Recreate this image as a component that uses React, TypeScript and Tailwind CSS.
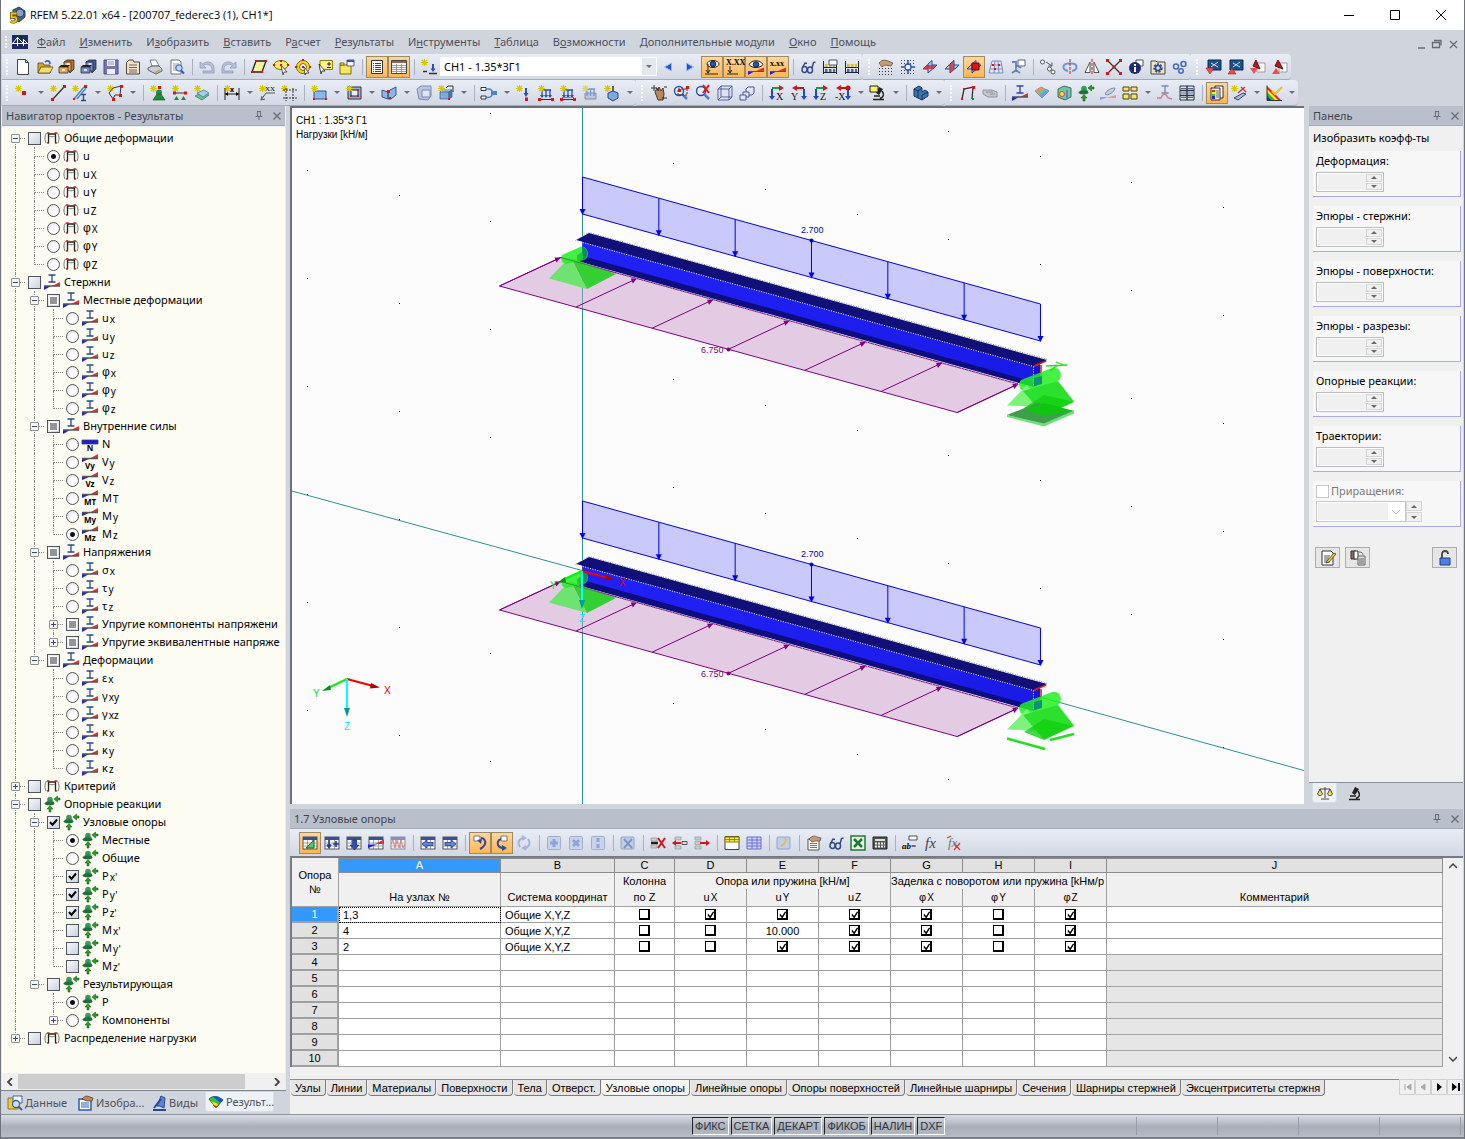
import React, { ReactNode } from "react";

/* ---------- shared icon parts (all on a 16x16 box) ---------- */

const star = <path d="M3.5 0v7M0 3.5h7M1 1l5 5M6 1L1 6" stroke="#d9c800" strokeWidth="1.2" fill="none" />;

const grid = (
  <g>
    <rect x="1" y="2" width="14" height="12" fill="#fff" stroke="#555" />
    <path d="M1 3.5h14" stroke="#3a4f9c" strokeWidth="3" />
    <path d="M1 8h14M1 11h14M5.5 5v9M10.5 5v9" stroke="#888" strokeWidth=".8" />
  </g>
);

const diagram = (
  <g>
    <path d="M0 16v-4h7z" fill="#1a1aff" />
    <path d="M16 8v4H8z" fill="#e03030" />
    <path d="M0 12h16" stroke="#555" strokeWidth="1.500" />
  </g>
);

const beamI = <path d="M4.500 1h7M4.500 8h7M8 1v7" stroke="#2c4a92" strokeWidth="1.300" fill="none" />;

const support = (
  <g>
    <circle cx="6" cy="3.500" r="2.800" fill="#3f9a5c" />
    <path d="M2 7c0-2 2-3 4-3s4 1 4 3z" fill="#2c8a4a" />
    <ellipse cx="5.500" cy="7.500" rx="5" ry="1.800" fill="#1f6f3a" />
    <path d="M16 2h-2.500V0L10 3l3.500 3V4H16z" fill="#12b012" stroke="#333" strokeWidth=".5" />
    <path d="M5 16v-3H3l3-3.500L9 13H7v3z" fill="#12b012" stroke="#333" strokeWidth=".5" />
  </g>
);

const greySheet = <rect x="1" y="2" width="13" height="12" rx="1" fill="#c3cde6" stroke="#93a3cb" />;

const abacus = (
  <g>
    <path d="M1.500 2v13M14.500 2v13M1 8.500h14M1 13.500h14" stroke="#222" fill="none" />
    <path d="M3 6.500h2.500M7 6.500h2.500M11 6.500h2" stroke="#e0c200" strokeWidth="3" />
    <path d="M3 11.500h2.500M7 11.500h2.500M11 11.500h2" stroke="#4566b8" strokeWidth="3" />
  </g>
);

const lens = (
  <g>
    <circle cx="6" cy="6" r="4.500" fill="#e4ecff" stroke="#2f4a9a" strokeWidth="1.400" />
    <path d="M9.500 9.500L14 14" stroke="#5b78c8" strokeWidth="2.500" />
  </g>
);

const cadPlane = (
  <g fill="#a9c8ef" stroke="#1d4f9c">
    <path d="M1 10l4-4h10l-4 4z" />
    <path d="M6 14V5l4-3.500v9z" />
  </g>
);

const axes = (letter: string, flip?: boolean) => (
  <g>
    <g transform={flip ? "translate(16 0) scale(-1 1)" : undefined}>
      <path d="M3 3h8" stroke={flip ? "#c81414" : "#11a03a"} strokeWidth="2" />
      <path d="M10 0l5 3-5 3z" fill="#d01818" />
      <path d="M3 4v8" stroke="#2546c9" strokeWidth="2" />
      <path d="M0 11h6l-3 4z" fill="#2546c9" />
    </g>
    <text x={flip ? 0 : 7} y="15" fontSize="10" fontFamily="Liberation Serif" fill="#111">
      {letter}
    </text>
  </g>
);

const solid = (
  <g>
    <path d="M2 7l3-2h9l-3 2z" fill="#c9dcf5" stroke="#38598f" strokeWidth=".7" />
    <path d="M2 7h9v7H2z" fill="#7fa8dc" stroke="#38598f" strokeWidth=".7" />
    <path d="M11 7l3-2v7l-3 2z" fill="#4f79b5" stroke="#38598f" strokeWidth=".7" />
  </g>
);

const loads = (
  <g>
    <path d="M3 5h10M4 5v7M8 5v7M12 5v7" stroke="#2a4fb5" strokeWidth="1.300" fill="none" />
    <path d="M2 10l2 3 2-3zM6 10l2 3 2-3zM10 10l2 3 2-3z" fill="#2a4fb5" />
    <path d="M1 14.500h14" stroke="#333" strokeWidth="1" />
    <path d="M0 13h3v3H0zM13 13h3v3h-3z" fill="#d81616" />
  </g>
);

const glasses = (
  <g fill="none" stroke="#34498c" strokeWidth="1.500">
    <ellipse cx="4.500" cy="10.500" rx="2.500" ry="3" />
    <ellipse cx="10" cy="11" rx="2.500" ry="3" />
    <path d="M2.500 8.500L5 4l2 .5M12 9l1.500-5.500 2-.5M7 10h1" />
  </g>
);

const scope = (
  <g>
    <path d="M9 2l4 2-4 6-3-2z" fill="#222" />
    <path d="M12 6c3 4 1 6-2 7.500M3 14.500h11M4 11h6" stroke="#222" strokeWidth="1.600" fill="none" />
  </g>
);

const cabinet = (a: string, b: string) => (
  <g>
    <path d="M5 3l3-2h7v9l-4 4z" fill={b} stroke="#333" strokeWidth=".8" />
    <path d="M5 3h7v9H5z" fill={a} stroke="#333" strokeWidth=".8" />
    <path d="M0 8h9v6H0z" fill={a} stroke="#333" strokeWidth=".8" />
    <path d="M0 8l2-2h9l-2 2z" fill="#222" />
    <path d="M3 11h3M7.500 5h3" stroke="#fff" strokeWidth="1.300" />
  </g>
);

const greyPlate = (fill: string) => (
  <g>
    <rect x="1.500" y="1.500" width="13" height="13" rx="1" fill="#cbd3ea" stroke="#a3aecb" />
    <path d={fill} stroke="#8fa2dc" strokeWidth="3" fill="none" />
  </g>
);

const ICONS: Record<string, ReactNode> = {
  new: <path d="M2.500.500h8l3 3v12h-11zM10.500.500v3h3" fill="#fff" stroke="#444" />,
  open: (
    <g>
      <path d="M1 14V4h5l1 2h6v8z" fill="#c9a92c" stroke="#5d4c10" strokeWidth=".8" />
      <path d="M1 14l3-6h12l-3 6z" fill="#f4dd6b" stroke="#5d4c10" strokeWidth=".8" />
      <path d="M8 3c3-2 5-1 5 2" stroke="#3e63b5" strokeWidth="1.800" fill="none" />
    </g>
  ),
  cabO: cabinet("#e9a54c", "#b97424"),
  cabB: cabinet("#6e8bd0", "#3d569c"),
  save: (
    <g>
      <path d="M1 1h14v14H1z" fill="#7176b8" stroke="#4a4f94" />
      <path d="M4 1h8v6H4zM4 10h8v5H4z" fill="#eef" />
      <path d="M5 3h6M5 5h6" stroke="#999" />
    </g>
  ),
  report: (
    <g>
      <path d="M1.500 3.500L4 1h4l1 2h5.500v12h-13z" fill="#f2e3cf" stroke="#554433" />
      <path d="M4 6h8M4 8.500h8M4 11h8M4 13h8" stroke="#776655" />
    </g>
  ),
  print: (
    <g>
      <path d="M3 1h6l3 6H5z" fill="#fff" stroke="#666" strokeWidth=".8" />
      <path d="M1 9l4-2h7l3 3v2l-6 3-8-4z" fill="#c9cede" stroke="#444" strokeWidth=".8" />
      <path d="M8 13.500l5-2.500" stroke="#c9a92c" strokeWidth="1.500" />
    </g>
  ),
  preview: (
    <g>
      <path d="M2 1h8l2 2v12H2z" fill="#fff" stroke="#777" />
      <path d="M4 5h6M4 7h3M4 9h3M4 11h3" stroke="#999" />
      <circle cx="10" cy="9" r="3.200" fill="#bcd6f7" stroke="#2f5bb0" />
      <path d="M12 11.500l3 3" stroke="#2f5bb0" strokeWidth="2" />
    </g>
  ),
  undo: <path d="M1 3v6h6L4.500 6.500C8 4 13 6 13 10v2H4v2h11V9C15 3 8 1 3.500 5z" fill="#b8c2dd" stroke="#8793b8" strokeWidth=".7" />,
  redo: (
    <path
      d="M1 3v6h6L4.500 6.500C8 4 13 6 13 10v2H4v2h11V9C15 3 8 1 3.500 5z"
      fill="#b8c2dd"
      stroke="#8793b8"
      strokeWidth=".7"
      transform="translate(16 0) scale(-1 1)"
    />
  ),
  para: (
    <g>
      <path d="M5 2h10l-4 11H1z" fill="#f9f29a" stroke="#222" strokeWidth="1.300" />
      <path d="M4 1h2v2H4zM14 1h2v2h-2zM0 12h2v2H0zM10 12h2v2h-2z" fill="#e01010" />
    </g>
  ),
  lasso: (
    <g>
      <ellipse cx="8" cy="6" rx="7" ry="4.500" fill="#f9ec6a" stroke="#7a6a00" />
      <path d="M8 6l6 7h-3l-1 3z" fill="#fff" stroke="#333" strokeWidth=".8" />
      <path d="M7 1h2v2H7zM7 5h2v2H7zM0 5h2v2H0zM14 5h2v2h-2z" fill="#e01010" />
    </g>
  ),
  ring: (
    <g>
      <circle cx="8" cy="8" r="6.500" fill="#f7dc1c" stroke="#7a6a00" />
      <circle cx="8" cy="8" r="3.500" fill="#f4f5fa" stroke="#7a6a00" />
      <path d="M7 0h2v2H7zM7 7h2v2H7zM0 7h2v2H0zM14 7h2v2h-2z" fill="#e01010" />
      <path d="M9 8l5 6h-3l-1 2z" fill="#fff" stroke="#333" strokeWidth=".8" />
    </g>
  ),
  pick: (
    <g>
      <path d="M3 1.500h12.500v9H3z" fill="#fbf38a" stroke="#8a7c00" />
      <path d="M12 3v4M10 5h4M10 8.500h4" stroke="#222" />
      <path d="M2 5l6 7H5l-1 3z" fill="#fff" stroke="#222" strokeWidth=".8" />
    </g>
  ),
  folderwin: (
    <g>
      <path d="M1 6h11v9H1z" fill="#f6e75e" stroke="#7f7100" />
      <path d="M1 4h4v2H1z" fill="#f6e75e" stroke="#7f7100" />
      <path d="M8 1h7v6H8z" fill="#fff" stroke="#5560a0" />
      <path d="M8 2h7" stroke="#44539c" strokeWidth="2" />
    </g>
  ),
  listwin: (
    <g>
      <path d="M2.500 1.500h11v13h-11z" fill="#fff" stroke="#333" />
      <path d="M4 4.500h1M6 4.500h6M4 6.500h1M6 6.500h6M4 8.500h1M6 8.500h6M4 10.500h1M6 10.500h6M4 12.500h1M6 12.500h6" stroke="#444" />
    </g>
  ),
  tablewin: (
    <g>
      <path d="M.5 1.500h15v13H.5z" fill="#fff" stroke="#444" />
      <path d="M1 3h14" stroke="#8a6a4a" strokeWidth="2" />
      <path d="M1 6.500h14M1 8.500h14M1 10.500h14M1 12.500h14M5.500 5v9M10.500 5v9" stroke="#888" strokeWidth=".8" />
    </g>
  ),
  newload: (
    <g>
      {star}
      <path d="M12 5v6" stroke="#2a4fb5" strokeWidth="2" />
      <path d="M9.500 9.500h5L12 13z" fill="#2a4fb5" />
      <path d="M2 12.500h4M8 14.500h8" stroke="#333" strokeWidth="1.300" />
    </g>
  ),
  prev: <path d="M11.500 4v8L4.500 8z" fill="#2456c7" stroke="#9fbbef" />,
  next: <path d="M4.500 4v8l7-4z" fill="#2456c7" stroke="#9fbbef" />,
  eyeload: (
    <g>
      <ellipse cx="9" cy="5" rx="6" ry="3.500" fill="#fff" stroke="#222" />
      <circle cx="9" cy="5" r="2.800" fill="#2a55b0" stroke="#123" />
      <path d="M4 5v9M2 11l2 3 2-3M1 15h13" stroke="#222" fill="none" />
    </g>
  ),
  xxload: (
    <g>
      <text x="0" y="6" fontSize="8" fontWeight="700" fontFamily="Liberation Serif">X.XX</text>
      <path d="M4 7v7M2 11l2 3 2-3M1 15h11" stroke="#222" fill="none" />
    </g>
  ),
  eyeres: (
    <g>
      <path d="M1 5.500c3-5 11-5 14 0-3 4-11 4-14 0z" fill="#fff" stroke="#222" />
      <circle cx="8" cy="5.500" r="2.800" fill="#2a55b0" stroke="#123" />
      <path d="M0 16v-4h7z" fill="#1a1aff" />
      <path d="M16 8.500V12H8z" fill="#e03030" />
      <path d="M0 12.500h16" stroke="#555" />
    </g>
  ),
  xxres: (
    <g>
      <text x="0" y="7" fontSize="8" fontWeight="700" fontFamily="Liberation Serif">x.xx</text>
      <path d="M0 16v-4h7z" fill="#1a1aff" />
      <path d="M16 8.500V12H8z" fill="#e03030" />
      <path d="M0 12.500h16" stroke="#555" />
    </g>
  ),
  glasses,
  abacus,
  abacus2: (
    <g>
      {abacus}
      <path d="M7 1h8v5H7z" fill="#fff" stroke="#44539c" />
    </g>
  ),
  handgrid: (
    <g>
      <path d="M1 9.500h14M1 12.500h14M1 15.500h14" stroke="#333" strokeDasharray="1 2" />
      <path d="M1 4c4-4 6-3 9-2l5 2-2 3-6-1-3 2z" fill="#c79c72" stroke="#5a4432" strokeWidth=".7" />
    </g>
  ),
  snap: (
    <g>
      <path d="M1 1.500h14M1 4.500h14M1 11.500h14M1 14.500h14" stroke="#444" strokeDasharray="1 2" />
      <circle cx="8" cy="8" r="3" fill="#fff" stroke="#2a4fb5" strokeWidth="1.300" />
      <path d="M8 1v4M8 11v4M1 8h4M11 8h4" stroke="#2a4fb5" strokeWidth="1.500" />
    </g>
  ),
  planeA: (
    <g>
      {cadPlane}
      <path d="M1 10l4-4h10l-4 4z" fill="#e32222" opacity=".75" />
    </g>
  ),
  planeB: (
    <g>
      {cadPlane}
      <path d="M6 14V5l4-3.500v9z" fill="#e32222" opacity=".75" />
    </g>
  ),
  planeC: (
    <g>
      {cadPlane}
      <path d="M6 4h7v7H6z" fill="#e01414" stroke="#701" />
    </g>
  ),
  mesh: (
    <g>
      <path d="M4 2h9l2 12H1z" fill="#dfe8fa" stroke="#7f8fbc" />
      <path d="M3 6h11M2 10h12M7 2l-1 12M10 2l1 12" stroke="#7f8fbc" />
      <path d="M4 5h2v2H4zM10 5h2v2h-2zM6 9h2v2H6z" fill="#e01414" />
    </g>
  ),
  tools: (
    <g>
      <path d="M8 1h7v6H8z" fill="#fff" stroke="#666" />
      <path d="M2 3h4v3l5 3M2 14l4-3 4 3M6 6v5" stroke="#6a82b8" strokeWidth="1.800" fill="none" />
    </g>
  ),
  circles: (
    <g fill="#fff" stroke="#555">
      <circle cx="2.500" cy="3" r="2" />
      <circle cx="9.500" cy="10" r="2" />
      <circle cx="13" cy="13" r="2" />
      <path d="M6 3l6 4M12 3.500V7H8.500" fill="none" />
    </g>
  ),
  rotate: (
    <g>
      <path d="M6 12C0 11 0 5 6 4.500h4c6 .5 6 6.500 0 7.500" fill="none" stroke="#6f93d8" strokeWidth="2" />
      <path d="M8 0v16" stroke="#e01414" strokeDasharray="3 1" />
    </g>
  ),
  mirror: (
    <g>
      <path d="M6 3v10.500H1zM10 3v10.500h5z" fill="#fff" stroke="#555" />
      <path d="M8 0v16" stroke="#e01414" strokeDasharray="3 1" />
    </g>
  ),
  cross: (
    <g>
      <path d="M2 2l12 12M14 2L2 14" stroke="#333" strokeWidth="1.300" />
      <path d="M0 0h3v3H0zM13 0h3v3h-3zM0 13h3v3H0zM13 13h3v3h-3zM6.500 6.500h3v3h-3z" fill="#d81616" />
    </g>
  ),
  info: (
    <g>
      <path d="M8 1h7v6H8z" fill="#fff" stroke="#555" />
      <circle cx="7" cy="9" r="6" fill="#1c2e70" />
      <path d="M7 5v2M7 8v5" stroke="#fff" strokeWidth="2" />
    </g>
  ),
  gearfold: (
    <g>
      <path d="M1 2h5l1 1h8v12H1z" fill="#f1e4c4" stroke="#444" />
      <circle cx="8" cy="9" r="3.500" fill="none" stroke="#2f4f9a" strokeWidth="2.500" strokeDasharray="2 1" />
      <circle cx="8" cy="9" r="2.500" fill="none" stroke="#2f4f9a" strokeWidth="1.500" />
    </g>
  ),
  gears: (
    <g fill="#dfe8ff" stroke="#4a6bb8" strokeWidth="1.600">
      <circle cx="4" cy="7.500" r="2.500" />
      <circle cx="11.500" cy="5" r="2.500" />
      <circle cx="9" cy="12" r="2.200" />
    </g>
  ),
  bimOut: (
    <g>
      <path d="M2 1h13v10H2z" fill="#1d4f8c" stroke="#0c2a55" />
      <path d="M5 4l7 4M5 8l7-5" stroke="#cfe3ff" />
      <path d="M0 9h8l-4 6z" fill="#e85050" stroke="#921" strokeWidth=".6" />
    </g>
  ),
  bimIn: (
    <g>
      <path d="M2 1h13v10H2z" fill="#1d4f8c" stroke="#0c2a55" />
      <path d="M5 4l7 4M5 8l7-5" stroke="#cfe3ff" />
      <path d="M0 15h8l-4-6z" fill="#e85050" stroke="#921" strokeWidth=".6" />
    </g>
  ),
  acadOut: (
    <g>
      <path d="M7 4h8v9H7z" fill="#fff" stroke="#999" />
      <path d="M6 1l4 9-7-3z" fill="#b01d1d" stroke="#611" />
      <path d="M0 9h8l-4 6z" fill="#e85050" />
    </g>
  ),
  acadIn: (
    <g>
      <path d="M7 4h8v9H7z" fill="#fff" stroke="#999" />
      <path d="M6 1l5 9-8-3z" fill="#b01d1d" stroke="#611" />
      <path d="M0 15h8l-4-6z" fill="#e85050" />
    </g>
  ),
  node: (
    <g>
      {star}
      <path d="M7 6h4v4H7z" fill="#d81616" />
    </g>
  ),
  line: (
    <g>
      {star}
      <path d="M3 14L14 2" stroke="#333" strokeWidth="1.300" />
      <path d="M1 13h3v3H1zM13 0h3v3h-3z" fill="#d81616" />
    </g>
  ),
  member: (
    <g>
      {star}
      <path d="M2 14L12 2M5 14l9-11" stroke="#4f8bc0" strokeWidth="1.500" />
      <path d="M1 13h2v2H1zM12 0h3v3h-3z" fill="#d81616" />
      <path d="M9 9.500h5M9 15.500h5M11.500 9.500v6" stroke="#2c4a92" strokeWidth="1.300" />
    </g>
  ),
  poly: (
    <g>
      {star}
      <path d="M6 14L2 8l4-5 8-2-1 9-5 0z" fill="none" stroke="#333" />
      <path d="M5 13h3v3H5zM13 0h3v3h-3zM12 9h3v3h-3z" fill="#d81616" />
    </g>
  ),
  nodesup: (
    <g>
      {star}
      <path d="M8 1h3v3H8z" fill="#d81616" />
      <circle cx="9" cy="7.500" r="3" fill="#2c8a4a" />
      <path d="M3 15l4-6h4l4 6z" fill="#1f8a3c" stroke="#0d4a1c" strokeWidth=".6" />
    </g>
  ),
  linesup: (
    <g>
      {star}
      <path d="M2 8h12" stroke="#333" />
      <path d="M1 6.500h3v3H1zM12 6.500h3v3h-3z" fill="#d81616" />
      <path d="M2 15l2.500-4L7 15zM9 15l2.500-4 2.500 4z" fill="#1f8a3c" />
    </g>
  ),
  surfsup: (
    <g>
      {star}
      <path d="M1 11l8-4 6 3-7 5z" fill="#6fbf8a" stroke="#2a7a4a" strokeWidth=".7" />
      <path d="M3 8l7-3 5 3-6 4z" fill="#a8cdec" stroke="#3a6a9a" strokeWidth=".7" />
    </g>
  ),
  dim: (
    <g>
      {star}
      <path d="M1 3v12M15 3v12M1 9h14" stroke="#222" />
      <path d="M1 9l3-2v4zM15 9l-3-2v4z" />
      <text x="6" y="7" fontSize="7" fontWeight="700">x</text>
    </g>
  ),
  leader: (
    <g>
      {star}
      <text x="6" y="6" fontSize="7" fontFamily="Liberation Serif">XX</text>
      <path d="M2 15l5-7h9M2 15l1-4M2 15l4-1" stroke="#555" fill="none" />
    </g>
  ),
  guide: (
    <g>
      {star}
      <path d="M5 3v13M12 3v13M2 5h14M2 13h14" stroke="#333" strokeDasharray="2 1" />
    </g>
  ),
  surface: (
    <g>
      <path d="M3 6h12v8H3z" fill="#8db6e2" stroke="#33588f" />
      <path d="M2 13h2v2H2zM14 13h2v2h-2z" fill="#d81616" />
      {star}
    </g>
  ),
  opening: (
    <g>
      <path d="M2 2h13v12H2z" fill="#8fb4e0" stroke="#333" />
      <path d="M5 5h7v6H5z" fill="#e9f0ff" stroke="#222" />
      <path d="M4 4h2v2H4zM11 4h2v2h-2zM4 10h2v2H4zM11 10h2v2h-2z" fill="#d81616" />
      {star}
    </g>
  ),
  curved: (
    <g>
      <path d="M1 5l6 2v7l-6-2zM7 7l2-2 6-3v8l-5 4-3 0z" fill="#8db6e2" stroke="#33588f" />
      <path d="M6 5h3v3H6zM8 12h2v2H8z" fill="#d81616" />
    </g>
  ),
  cube: (
    <g opacity=".75">
      <path d="M1 4l4-3h10v10l-3 4-9-1z" fill="#aebcdc" stroke="#5a6d9c" />
      <path d="M6 5h8v7H6z" fill="#dfe6f6" stroke="#5a6d9c" />
    </g>
  ),
  solidnew: (
    <g>
      {solid}
      <path d="M8 3l2-2h5v6" fill="none" stroke="#333" />
      {star}
      <path d="M10 13h2v2h-2z" fill="#d81616" />
    </g>
  ),
  hinge: (
    <g>
      <path d="M0 2.500h5v3H0zM0 11h5v3H0z" fill="#fff" stroke="#333" />
      <path d="M5 4h2.500c3 0 4 2 4 4s-1 4-4 4.500H5" fill="none" stroke="#4d83c8" strokeWidth="1.300" />
      <path d="M10 6h6v4h-6z" fill="#4d83c8" />
    </g>
  ),
  pointload: (
    <g>
      {star}
      <path d="M10 3v7" stroke="#2a4fb5" strokeWidth="2" />
      <path d="M7.500 8h5L10 12z" fill="#2a4fb5" />
      <path d="M9 12.500h3V16H9z" fill="#d81616" />
    </g>
  ),
  lineload: (
    <g>
      {loads}
      {star}
    </g>
  ),
  memload: (
    <g>
      {loads}
      <path d="M2 12.500h12" stroke="#4f8bc0" />
      {star}
    </g>
  ),
  surfload: (
    <g opacity=".55">
      <path d="M3 8h11v6H3z" fill="#9cb4dc" stroke="#555" />
      <path d="M4 4h9M5 4v7M8.500 4v7M12 4v7" stroke="#2a4fb5" strokeWidth="1.300" />
      {star}
    </g>
  ),
  solload: (
    <g>
      {star}
      <path d="M9 1v6" stroke="#333" strokeWidth="1.500" />
      <path d="M4 8l5-2 5 2v5l-5 3-5-3z" fill="#7fa8dc" stroke="#2a4a85" />
    </g>
  ),
  hand: (
    <g>
      <path d="M4 7l2-4 1 3 1-4 2 4 2-3 1 6-1 6H7z" fill="#b8875c" stroke="#4a3524" />
      <path d="M0 3h6M3 0v6M11 13h5M13 2h3" stroke="#333" />
    </g>
  ),
  zoomwin: (
    <g>
      {lens}
      <path d="M5 4h9v6H5z" fill="none" stroke="#333" strokeDasharray="2 1" />
      <path d="M5 4h3v3H5zM13 1h3v3h-3z" fill="#d81616" />
    </g>
  ),
  zoomx: (
    <g>
      {lens}
      <path d="M8 0l6 8M14 0L8 8" stroke="#d81616" strokeWidth="2" />
    </g>
  ),
  wire: <path d="M1 4l3-3h11v11l-3 3H1zM1 4h11v11M12 4l3-3M4 1v11h11M4 12l-3 3" fill="#dde3f5" stroke="#4a5a92" strokeWidth=".9" />,
  views: (
    <g fill="#dfe6f6" stroke="#4a5a92">
      <path d="M7 4l2-2h6v6l-2 2H7z" />
      <path d="M4 7h6v5H4z" />
      <path d="M1 10h6v5H1z" />
    </g>
  ),
  axX: axes("X"),
  axY: axes("Y", true),
  axZ: axes("Z"),
  axN: (
    <g>
      {axes("-X", true)}
      <circle cx="13" cy="3" r="2.500" fill="#c01414" />
    </g>
  ),
  viewset: (
    <g>
      {scope}
      <path d="M0 1h8v6H0z" fill="#fff45c" stroke="#222" />
    </g>
  ),
  scope,
  solidblue: (
    <g>
      <path d="M1 4l5-3 3 2v4l3-2 3 2v4l-6 4-8-4z" fill="#3f74b0" stroke="#16365f" />
      <path d="M1 4l4 2v7M5 6l4-3M9 10l6-3M9 10v5" fill="none" stroke="#16365f" />
    </g>
  ),
  frame: (
    <g>
      <path d="M2 14L4 4l9-2-1 12" fill="none" stroke="#333" strokeWidth="1.300" />
      <path d="M3 3h2v2H3zM12 1h3v3h-3zM1 13h2v2H1z" fill="#d81616" />
      <path d="M12 13h2v2h-2z" fill="#1f8a3c" />
    </g>
  ),
  plate: (
    <g opacity=".7">
      <path d="M1 5h9l5 2v5H6L1 9z" fill="#bbb" stroke="#777" />
      <path d="M4 7h7M8 9h5" stroke="#777" />
    </g>
  ),
  beamres: (
    <g>
      {beamI}
      {diagram}
    </g>
  ),
  surfres: (
    <g>
      <path d="M1 6l6-4 8 4-7 7z" fill="#7cc96a" stroke="#666" strokeWidth=".6" />
      <path d="M1 6l6-4 3 1.500-7 4z" fill="#ef8a7a" />
      <path d="M5 10l8-6 2 2-7 7z" fill="#6c9df0" />
    </g>
  ),
  solres: (
    <g>
      <path d="M2 4l6-3 7 2v9l-6 3-7-3z" fill="#6cc8a0" stroke="#4a6a5a" />
      <circle cx="6" cy="9" r="2.500" fill="#f0dc4a" stroke="#e04a3a" />
      <path d="M11 5v8" stroke="#5a88e0" strokeWidth="2" />
    </g>
  ),
  support,
  sections: (
    <g opacity=".6">
      <path d="M5 9c2-4 6-6 10-6-1 4-4 6-8 7z" fill="#9fc0ea" stroke="#4a5a80" />
      <path d="M0 15v-3l8 0z" fill="#7070e0" />
      <path d="M16 10v3H6z" fill="#e07070" />
    </g>
  ),
  panels: (
    <g fill="#f7e56a" stroke="#4a4410">
      <path d="M1 2h6v4H1zM9 2h6v4H9zM1 9h6v5H1zM9 9h6v5H9z" />
    </g>
  ),
  redbeam: (
    <g opacity=".6">
      {beamI}
      <path d="M0 13h4c2-5 5-5 7 0l4 1" fill="none" stroke="#d04040" strokeWidth="1.300" />
    </g>
  ),
  multi: (
    <g>
      <path d="M1 1h14v14H1z" fill="#dfe6f6" stroke="#333" />
      <path d="M8 1v14M1 5.500h14M1 10.500h14" stroke="#333" strokeWidth="1.500" />
      <path d="M2 3.500h5M9 3.500h5M2 8h5M9 8h5M2 12.500h5M9 12.500h5" stroke="#4a6ab8" />
    </g>
  ),
  legend: (
    <g>
      <path d="M6 1h8v12H6z" fill="#fff" stroke="#333" />
      <path d="M2 3h9v12H2z" fill="#f7f3e4" stroke="#333" />
      <path d="M3 5h3v2H3z" fill="#e22" />
      <path d="M3 7h3v2H3z" fill="#ee2" />
      <path d="M3 9h3v2H3z" fill="#2c2" />
      <path d="M3 11h3v3H3z" fill="#22e" />
      <path d="M7 6h3M7 8h3M7 10h3M7 12h3" stroke="#444" strokeWidth=".8" />
    </g>
  ),
  wand: (
    <g>
      {star}
      <path d="M3 13l9-5 3 1-8 6z" fill="#9fc0ea" stroke="#444" />
      <path d="M7 8l7-6M10 2l5 5" stroke="#c33" strokeWidth="1.300" />
    </g>
  ),
  rainbow: (
    <g>
      <path d="M1 1l14 14H1z" fill="#e22" />
      <path d="M1 4l11 11H1z" fill="#ee2" />
      <path d="M1 7l8 8H1z" fill="#2b2" />
      <path d="M1 11l4 4H1z" fill="#22e" />
      <path d="M6 6l3 3 7-7" stroke="#f3c21a" strokeWidth="2" fill="none" />
      <path d="M1 .5v15h15" stroke="#333" fill="none" />
    </g>
  ),

  /* table toolbar */
  tEdit: (
    <g>
      {grid}
      <path d="M4 13l8-8v8z" fill="#5ec45e" stroke="#187018" />
    </g>
  ),
  tPlus: (
    <g>
      {grid}
      <path d="M5 5v7M3 9.500l2 3 2-3M9 9h6M12 6v6" stroke="#1d3a9a" strokeWidth="1.600" fill="none" />
    </g>
  ),
  tDown: (
    <g>
      {grid}
      <path d="M6.500 5h4v5H13l-4.500 5L4 10h2.500z" fill="#2a4fb5" stroke="#14286a" strokeWidth=".6" />
    </g>
  ),
  tDiag: (
    <g>
      {grid}
      <path d="M0 13V9.500h9z" fill="#1a1aff" />
      <path d="M16 4.500V9H7z" fill="#e03030" />
    </g>
  ),
  tWave: (
    <g opacity=".55">
      {grid}
      <path d="M1 9l2-4 2 8 2-8 2 8 2-8 2 8 2-4" fill="none" stroke="#e03030" />
    </g>
  ),
  tLeft: (
    <g>
      {grid}
      <path d="M2 9l5-4v2.500h6v3H7V13z" fill="#5f86d8" stroke="#1d3a9a" strokeWidth=".8" />
    </g>
  ),
  tRight: (
    <g>
      {grid}
      <path d="M14 9L9 5v2.500H3v3h6V13z" fill="#5f86d8" stroke="#1d3a9a" strokeWidth=".8" />
    </g>
  ),
  curveA: (
    <g>
      <path d="M2 1h6v5H2z" fill="#fff" stroke="#777" />
      <path d="M9 3c3 0 5 3 4 6s-3 4-5 5" fill="none" stroke="#2f4a9a" strokeWidth="2" />
      <path d="M3 8l5-1-1 5z" fill="#2f4a9a" transform="translate(2 -3)" />
    </g>
  ),
  curveB: (
    <g>
      <path d="M7 1h6v5H7z" fill="#fff" stroke="#777" />
      <path d="M7 4C4 5 3 8 4 10s3 3 5 3" fill="none" stroke="#2f4a9a" strokeWidth="2" />
      <path d="M8 10l5 3-5 3z" fill="#2f4a9a" />
    </g>
  ),
  cycle: <path d="M4 12C1 8 3 3 8 3M12 4c3 4 1 9-4 9M6 1l3 2-3 2M10 15l-3-2 3-2" fill="none" stroke="#a5b5dc" strokeWidth="2" />,
  gPlus: greyPlate("M8 4v8M4 8h8"),
  gX: greyPlate("M5 5l6 6M11 5l-6 6"),
  gDots: greyPlate("M8 3v4M8 9v4"),
  gDel: (
    <g>
      {greySheet}
      <path d="M4 4l8 9M12 4l-8 9" stroke="#7f93c6" strokeWidth="2" />
    </g>
  ),
  rowDel: (
    <g>
      <path d="M1 3h6v3H1zM1 10h6v3H1z" fill="#ccc" stroke="#999" strokeWidth=".7" />
      <path d="M1 8h7" stroke="#222" strokeWidth="2.500" />
      <path d="M8 3l7 10M15 3L8 13" stroke="#d01818" strokeWidth="2" />
    </g>
  ),
  rowIn: (
    <g>
      <path d="M3 2h6v3H3zM3 11h6v3H3z" fill="#ccc" stroke="#999" strokeWidth=".7" />
      <path d="M10 6.500h5v3h-5z" fill="#ddd" stroke="#555" />
      <path d="M0 8l4-3v2h5v2H4v2z" fill="#d01818" />
    </g>
  ),
  rowOut: (
    <g>
      <path d="M1 2h6v3H1zM1 11h6v3H1zM1 6.500h6v3H1z" fill="#ccc" stroke="#999" strokeWidth=".7" />
      <path d="M16 8l-4-3v2H6v2h6v2z" fill="#d01818" />
    </g>
  ),
  tYellow: (
    <g>
      <path d="M1 1.500h14v13H1z" fill="#fff" stroke="#444" />
      <path d="M1 2h14v5H1z" fill="#f4e64a" stroke="#8a7c00" />
      <path d="M1 4.500h14M5.500 2v5M10.500 2v5" stroke="#8a7c00" strokeWidth=".8" />
    </g>
  ),
  tBlue: (
    <g>
      <path d="M1 2h14v12H1z" fill="#cdd3fa" stroke="#6a72b0" />
      <path d="M1 5h14M1 8h14M1 11h14M6 2v12M11 2v12" stroke="#6a72e0" />
    </g>
  ),
  sheet: (
    <g>
      {greySheet}
      <path d="M9 3c2 3 0 6-4 8" fill="none" stroke="#d8c44a" strokeWidth="2" />
    </g>
  ),
  handdoc: (
    <g>
      <path d="M2 4h11v11H2z" fill="#fff" stroke="#555" />
      <path d="M4 8.500h7M4 10.500h7M4 12.500h7" stroke="#777" />
      <path d="M3 4c4-4 6-3 8-2l4 1-1 3-5 0-3 1z" fill="#c79c72" stroke="#5a4432" strokeWidth=".7" />
    </g>
  ),
  excel: (
    <g>
      <path d="M1 1h14v14H1z" fill="#e8f3e6" stroke="#1f7a33" strokeWidth="1.500" />
      <path d="M4 4l8 8M12 4l-8 8" stroke="#1f7a33" strokeWidth="2.500" />
    </g>
  ),
  calc: (
    <g>
      <path d="M1 2h14v12H1z" fill="#555" stroke="#222" />
      <path d="M3 4h10v2H3z" fill="#cfe6cf" />
      <path d="M3 8.500h10M3 11.500h10" stroke="#eee" strokeWidth="2" strokeDasharray="2 1" />
    </g>
  ),
  abeq: (
    <g>
      <path d="M7 1h8v4H7z" fill="#fff" stroke="#555" />
      <text x="0" y="14" fontSize="9" fontStyle="italic" fontWeight="700" fontFamily="Liberation Serif">ab=</text>
    </g>
  ),
  fx: <text x="1" y="13" fontSize="15" fontStyle="italic" fontFamily="Liberation Serif" fill="#444">fx</text>,
  fxr: (
    <g>
      <text x="2" y="12" fontSize="13" fontStyle="italic" fontFamily="Liberation Serif" fill="#777">fx</text>
      <path d="M8 8l6 7M14 8l-6 7M1 3l4-2" stroke="#d04040" strokeWidth="1.300" />
    </g>
  ),

  /* tree */
  deform: (
    <g fill="none">
      <path d="M4.500 13V4h7v9" stroke="#222" strokeWidth="1.300" />
      <path d="M2.500 3C.5 6 .5 10 2 13M13.500 3c2 3 2 7 .5 10M5 6c2 1 4 1 6 0" stroke="#666" strokeWidth=".9" />
      <path d="M3 3h2.500M10.500 3H13" stroke="#e01414" strokeWidth="1.600" />
      <path d="M4 12v2M12 12v2" stroke="#a01010" strokeWidth="1.300" />
    </g>
  ),

  /* bottom tabs and side panel */
  navData: (
    <g>
      <path d="M1 3h5l1 1h4v10H1z" fill="#f0c93c" stroke="#7a6310" strokeWidth=".8" />
      <path d="M6 1h9v7H6z" fill="#fff" stroke="#3a5fb0" />
      <circle cx="9" cy="9" r="3.500" fill="#cfe2fb" stroke="#3a5fb0" strokeWidth="1.300" />
      <path d="M11.500 11.500L15 15" stroke="#3a5fb0" strokeWidth="2" />
    </g>
  ),
  navShow: (
    <g>
      <path d="M1 4h12v11H1z" fill="#fff" stroke="#2f5bb0" strokeWidth="1.500" />
      <path d="M3 8h8M3 10h8M3 12h8" stroke="#2f5bb0" />
      <path d="M4 4c4-4 5-3 8-2l3 1-1 3-5 0z" fill="#b98a62" stroke="#4a3524" strokeWidth=".7" />
    </g>
  ),
  navView: (
    <g>
      <path d="M9 1l4 2-1 10-4-2-3 0z" fill="#5a84d6" stroke="#27479a" />
      <path d="M2 13l7-9M1 15h13" stroke="#27479a" strokeWidth="2" />
    </g>
  ),
  navRes: (
    <g>
      <path d="M1 5c4-4 9-3 14 1l-7 8z" fill="#2fc43a" stroke="#333" strokeWidth=".8" />
      <path d="M5 2.500c4-1 7 1 10 3.500l-3 3z" fill="#1d4fe0" />
      <path d="M3 7l7 3-2 4z" fill="#f4e324" />
      <path d="M5 11l4 1-1 2z" fill="#e82a1a" />
    </g>
  ),
  scales: (
    <g fill="#f4e64a" stroke="#333" strokeWidth=".9">
      <path d="M8 2v11M3 4h10M4 14h8" fill="none" />
      <path d="M0.500 9L3 4l2.500 5c-1 2-4 2-5 0zM10.500 9L13 4l2.500 5c-1 2-4 2-5 0z" />
    </g>
  ),
  note: (
    <g>
      <path d="M2 1h9l2 2v12H2z" fill="#fff" stroke="#333" />
      <path d="M4 6h6M4 8h5M4 10h5M4 12h6" stroke="#555" />
      <path d="M7 11l7-8 2 1-7 8-3 1z" fill="#f5d82c" stroke="#333" strokeWidth=".8" />
    </g>
  ),
  copyval: (
    <g>
      <path d="M1 1h5v8H1z" fill="#8a6f5c" stroke="#333" />
      <path d="M4 1h4v8H4z" fill="#fff" stroke="#333" />
      <path d="M8 6h7v9H8z" fill="#ddd" stroke="#666" />
      <path d="M9 9h5M9 11h5M9 13h5M9 2c3 0 4 1 4 3" stroke="#666" fill="none" />
    </g>
  ),
  lock: (
    <g>
      <path d="M5 8V4c0-4 6-4 6 0" fill="none" stroke="#444" strokeWidth="1.800" />
      <path d="M3 8h10v7H3z" fill="#4f7fe6" stroke="#1d3f8a" />
    </g>
  ),
};

function Icon({ name }: { name: string }) {
  return (
    <svg viewBox="0 0 16 16" className="h-4 w-4 shrink-0 overflow-visible" aria-hidden="true">
      {ICONS[name]}
    </svg>
  );
}

function ForceIcon({ label }: { label: string }) {
  return (
    <svg viewBox="0 0 16 16" className="h-4 w-4 shrink-0 overflow-visible" aria-hidden="true">
      {label === "N" ? (
        <path d="M0 4h16v4H0z" fill="#1a1ae0" stroke="#445" strokeWidth=".8" />
      ) : (
        <g>
          <path d="M0 8V4.500h8z" fill="#1a1aff" />
          <path d="M16 0v4.500H8z" fill="#e03030" />
          <path d="M0 4.500h16" stroke="#555" strokeWidth="1.500" />
        </g>
      )}
      <text x="8" y="15" fontSize="8" fontWeight="700" textAnchor="middle" fontFamily="Noto Sans">
        {label}
      </text>
    </svg>
  );
}

/* ---------- toolbars ---------- */

// "|" separator, "v" drop-down arrow, leading "*" means pressed
function Tools({ items }: { items: string }) {
  return (
    <>
      {items.split(" ").map((it, i) => {
        if (it === "|") {
          return (
            <span key={i} className="flex w-2 shrink-0 justify-center">
              <span className="h-4 w-px bg-[#a9b0bf]" />
            </span>
          );
        }
        if (it === "v") {
          return (
            <button key={i} aria-label="Ещё" className="flex h-5 w-[13px] shrink-0 items-center justify-center">
              <span className="border-x-[3px] border-t-[3px] border-x-transparent border-t-[#6b6f78]" />
            </button>
          );
        }
        const on = it[0] === "*";
        const name = on ? it.slice(1) : it;
        return (
          <button
            key={i}
            aria-label={name}
            className={
              "flex h-[22px] w-[22px] shrink-0 items-center justify-center " +
              (on ? "border border-[#a08a62] bg-linear-to-b from-[#fbd7a0] to-[#fdb64e]" : "")
            }
          >
            <Icon name={name} />
          </button>
        );
      })}
    </>
  );
}

function Strip({ children, first }: { children: ReactNode; first?: boolean }) {
  return (
    <div className="flex h-[26px] shrink-0 items-center rounded-r border-b border-[#a4abb9] bg-linear-to-b from-[#e9edf6] to-[#d2d8e4]">
      <span className={first ? "flex w-[10px] justify-center" : "flex w-3 justify-center"}>
        <span className="h-4 border-l-2 border-dotted border-[#fafbfd]" />
      </span>
      {children}
    </div>
  );
}

const MENU = [
  ["", "Ф", "айл"],
  ["", "И", "зменить"],
  ["И", "з", "образить"],
  ["", "В", "ставить"],
  ["Р", "а", "счет"],
  ["", "Р", "езультаты"],
  ["И", "н", "струменты"],
  ["", "Т", "аблица"],
  ["В", "о", "зможности"],
  ["", "Д", "ополнительные модули"],
  ["", "О", "кно"],
  ["", "П", "омощь"],
];

function Header() {
  return (
    <header>
      <div className="flex h-[30px] items-center bg-white pl-[7px] text-[11px] text-black">
        <svg viewBox="0 0 18 18" className="mr-1 h-[18px] w-[18px] overflow-visible" aria-hidden="true">
          <path d="M5 4l6-3 6 4v6l-6 5-6-4z" fill="#4a6285" stroke="#2a3a55" />
          <circle cx="12" cy="7" r="4" fill="#8aa0c0" stroke="#2f4465" />
          <path d="M8.500 7.500h-5v4c4-1 5 0 5 2 0 3-4 3-6 2" fill="none" stroke="#5a4500" strokeWidth="3" />
          <path d="M8.500 7.500h-5v4c4-1 5 0 5 2 0 3-4 3-6 2" fill="none" stroke="#f4c51c" strokeWidth="1.800" />
        </svg>
        <h1 className="flex-1 font-['Open_Sans']">RFEM 5.22.01 x64 - [200707_federec3 (1), CH1*]</h1>
        <button aria-label="Свернуть" className="flex w-[46px] justify-center">
          <svg viewBox="0 0 12 12" className="h-3 w-3"><path d="M1 6.500h10" stroke="#000" /></svg>
        </button>
        <button aria-label="Развернуть" className="flex w-[45px] justify-center">
          <svg viewBox="0 0 12 12" className="h-3 w-3"><path d="M1.500 1.500h9v9h-9z" fill="none" stroke="#000" /></svg>
        </button>
        <button aria-label="Закрыть" className="flex w-[47px] justify-center">
          <svg viewBox="0 0 12 12" className="h-3 w-3"><path d="M1 1l10 10M11 1L1 11" stroke="#000" /></svg>
        </button>
      </div>

      <nav className="flex h-6 items-center pl-1 text-[11px] text-[#4c515c]">
        <span className="h-3 border-l-2 border-dotted border-[#f4f6fa]" />
        <svg viewBox="0 0 16 14" className="mr-[9px] ml-[5px] h-[14px] w-4" aria-hidden="true">
          <path d="M0 0h16v14H0z" fill="#1c2a63" />
          <path d="M0 8.500h16M5.500 2v9M5 3L1 8M6 3l5 5M11.500 4v7M12 5l3 3" stroke="#fff" />
        </svg>
        <div className="flex flex-1 gap-[14px]">
          {MENU.map(([a, u, b]) => (
            <a key={a + u + b} href="#" className="block">
              {a}
              <u>{u}</u>
              {b}
            </a>
          ))}
        </div>
        <svg viewBox="0 0 44 12" className="mt-1 mr-1 h-3 w-11" aria-hidden="true">
          <path d="M2 10h7M16.500 4.500h7v5h-7zM18 2.500h7v5M34 3l7 7M41 3l-7 7" fill="none" stroke="#666b75" strokeWidth="1.300" />
        </svg>
      </nav>

      <div className="flex pl-px">
        <Strip first>
          <Tools items="new open cabO cabB save report print preview | undo redo | para lasso ring pick folderwin | *listwin *tablewin | newload" />
          <label className="grid">
            <select
              aria-label="Загружение"
              className="col-start-1 row-start-1 h-[19px] w-[217px] appearance-none bg-white pl-1 text-[11px] text-black"
            >
              <option>CH1 - 1.35*3Г1</option>
            </select>
            <span className="pointer-events-none col-start-1 row-start-1 m-px flex w-[14px] items-center justify-center justify-self-end bg-[#e4e7ee]">
              <span className="border-x-[3px] border-t-[3px] border-x-transparent border-t-[#6b6f78]" />
            </span>
          </label>
          <Tools items="prev next *eyeload *xxload *eyeres *xxres | glasses abacus2 abacus" />
        </Strip>
        <Strip>
          <Tools items="handgrid snap planeA planeB *planeC mesh tools | circles rotate mirror cross info gearfold gears" />
        </Strip>
        <Strip>
          <Tools items="bimOut bimIn acadOut acadIn" />
        </Strip>
      </div>
      <div className="flex pl-px">
        <Strip first>
          <Tools items="node v line member v poly v | nodesup linesup surfsup | dim v leader guide | surface v opening v curved v cube solidnew v | hinge v pointload lineload memload surfload solload v" />
        </Strip>
        <Strip>
          <Tools items="hand zoomwin zoomx wire views | axX axY axZ axN v viewset v | solidblue v" />
        </Strip>
        <Strip>
          <Tools items="frame plate | beamres surfres solres support sections panels v redbeam multi | *legend wand v rainbow v" />
        </Strip>
      </div>
    </header>
  );
}

function PanelTitle({ text }: { text: string }) {
  return (
    <div className="flex h-5 shrink-0 items-center border-b border-[#a3abba] bg-[#bac0cb] pl-1 text-[11px] text-[#3f4450]">
      <h2 className="flex-1 whitespace-nowrap">{text}</h2>
      <button aria-label="Закрепить" className="flex w-5 justify-center">
        <svg viewBox="0 0 8 9" className="h-[9px] w-2"><path d="M2.500 1v4M5.500 1v4M2 .500h4M.500 5.500h7M4 6v3" stroke="#666b75" /></svg>
      </button>
      <button aria-label="Закрыть" className="flex w-4 justify-center">
        <svg viewBox="0 0 8 8" className="h-2 w-2"><path d="M.5.5l7 7M7.500.500l-7 7" stroke="#666b75" strokeWidth="1.300" /></svg>
      </button>
    </div>
  );
}

/* ---------- navigator tree ---------- */

type Node = { d: number; c: string; icon: string; t: string; s?: string; x?: string };

const n = (d: number, c: string, icon: string, t: string, s?: string, x?: string): Node => ({ d, c, icon, t, s, x });

const TREE: Node[] = [
  n(0, "box", "deform", "Общие деформации", "", "-"),
  n(1, "radioOn", "deform", "u"),
  n(1, "radio", "deform", "u", "X"),
  n(1, "radio", "deform", "u", "Y"),
  n(1, "radio", "deform", "u", "Z"),
  n(1, "radio", "deform", "φ", "X"),
  n(1, "radio", "deform", "φ", "Y"),
  n(1, "radio", "deform", "φ", "Z"),
  n(0, "box", "beamres", "Стержни", "", "-"),
  n(1, "mixed", "beamres", "Местные деформации", "", "-"),
  n(2, "radio", "beamres", "u", "x"),
  n(2, "radio", "beamres", "u", "y"),
  n(2, "radio", "beamres", "u", "z"),
  n(2, "radio", "beamres", "φ", "x"),
  n(2, "radio", "beamres", "φ", "y"),
  n(2, "radio", "beamres", "φ", "z"),
  n(1, "mixed", "beamres", "Внутренние силы", "", "-"),
  n(2, "radio", "=N", "N"),
  n(2, "radio", "=Vy", "V", "y"),
  n(2, "radio", "=Vz", "V", "z"),
  n(2, "radio", "=MT", "M", "T"),
  n(2, "radio", "=My", "M", "y"),
  n(2, "radioOn", "=Mz", "M", "z"),
  n(1, "mixed", "beamres", "Напряжения", "", "-"),
  n(2, "radio", "beamres", "σ", "x"),
  n(2, "radio", "beamres", "τ", "y"),
  n(2, "radio", "beamres", "τ", "z"),
  n(2, "mixed", "beamres", "Упругие компоненты напряжени", "", "+"),
  n(2, "mixed", "beamres", "Упругие эквивалентные напряже", "", "+"),
  n(1, "mixed", "beamres", "Деформации", "", "-"),
  n(2, "radio", "beamres", "ε", "x"),
  n(2, "radio", "beamres", "γ", "xy"),
  n(2, "radio", "beamres", "γ", "xz"),
  n(2, "radio", "beamres", "κ", "x"),
  n(2, "radio", "beamres", "κ", "y"),
  n(2, "radio", "beamres", "κ", "z"),
  n(0, "box", "deform", "Критерий", "", "+"),
  n(0, "box", "support", "Опорные реакции", "", "-"),
  n(1, "boxOn", "support", "Узловые опоры", "", "-"),
  n(2, "radioOn", "support", "Местные"),
  n(2, "radio", "support", "Общие"),
  n(2, "boxOn", "support", "P", "x'"),
  n(2, "boxOn", "support", "P", "y'"),
  n(2, "boxOn", "support", "P", "z'"),
  n(2, "box", "support", "M", "x'"),
  n(2, "box", "support", "M", "y'"),
  n(2, "box", "support", "M", "z'"),
  n(1, "box", "support", "Результирующая", "", "-"),
  n(2, "radioOn", "support", "P"),
  n(2, "radio", "support", "Компоненты", "", "+"),
  n(0, "box", "deform", "Распределение нагрузки", "", "+"),
];

// true if another node of the given level follows inside the same parent
function continues(i: number, level: number) {
  const next = TREE.slice(i + 1).find((x) => x.d <= level);
  return !!next && next.d === level;
}

function Guide({ up, down, side, exp }: { up: boolean; down: boolean; side: boolean; exp?: string }) {
  return (
    <span className="relative flex h-[18px] w-[19px] shrink-0 pl-[9px]">
      <span className="flex flex-1 flex-col">
        <span
          className={
            "h-[10px] border-dotted border-[#8a8a8a] " + (up ? "border-l " : "") + (side ? "border-b" : "")
          }
        />
        <span className={"flex-1 border-dotted border-[#8a8a8a] " + (down ? "border-l" : "")} />
      </span>
      {exp && (
        <button
          aria-label={exp === "+" ? "Развернуть" : "Свернуть"}
          className="absolute top-[5px] left-[5px] flex h-[9px] w-[9px] items-center justify-center rounded-[1px] border border-[#8f8f8f] bg-[#f7f7f4]"
        >
          <svg viewBox="0 0 5 5" className="h-[5px] w-[5px] shrink-0">
            <path d={exp === "+" ? "M0 2.500h5M2.500 0v5" : "M0 2.500h5"} stroke="#2b4aa0" />
          </svg>
        </button>
      )}
    </span>
  );
}

function Mark({ c, id, name }: { c: string; id: string; name: string }) {
  const radio = c.startsWith("radio");
  return (
    <span className="grid w-[19px] shrink-0 place-items-center">
      {radio ? (
        <input
          id={id}
          name={name}
          type="radio"
          defaultChecked={c === "radioOn"}
          className="col-start-1 row-start-1 h-[13px] w-[13px] appearance-none rounded-full border border-[#555] bg-[radial-gradient(circle_at_60%_65%,#fff_30%,#d5dae4)] checked:bg-[radial-gradient(circle,#111_2px,#fff_3px,#e4e7ee)]"
        />
      ) : (
        <input
          id={id}
          type="checkbox"
          defaultChecked={c === "boxOn"}
          className="col-start-1 row-start-1 h-[13px] w-[13px] appearance-none border border-[#4d5562] bg-linear-to-br from-[#f7f8fa] to-[#ccd3df]"
        />
      )}
      {c === "mixed" && <span className="pointer-events-none col-start-1 row-start-1 h-[9px] w-[9px] border border-[#fff] bg-[#949494]" />}
      {c === "boxOn" && (
        <svg viewBox="0 0 9 9" className="pointer-events-none col-start-1 row-start-1 h-[9px] w-[9px]">
          <path d="M1 4l2.500 3L8 1.500" fill="none" stroke="#000" strokeWidth="2" />
        </svg>
      )}
    </span>
  );
}

function Navigator() {
  let group = 0;
  return (
    <aside className="flex w-[285px] shrink-0 flex-col">
      <div className="flex flex-1 flex-col border-x border-[#e8ebf3]">
        <PanelTitle text="Навигатор проектов - Результаты" />
        <ul className="min-h-0 flex-1 overflow-hidden border-t border-[#eceff5] bg-[#fcfcf2] pt-[2px] pl-[4px] text-[11px] text-black">
          {TREE.map((row, i) => {
            if (row.x) group++;
            return (
              <li key={i} className="flex h-[18px] items-center">
                {Array.from({ length: row.d }, (_, l) => (
                  <Guide key={l} up={continues(i, l)} down={continues(i, l)} side={false} />
                ))}
                <Guide up={i > 0} down={continues(i, row.d)} side exp={row.x} />
                <Mark c={row.c} id={`n${i}`} name={`g${row.x ? "x" + i : group}`} />
                {row.icon[0] === "=" ? <ForceIcon label={row.icon.slice(1)} /> : <Icon name={row.icon} />}
                <label htmlFor={`n${i}`} className="pl-1 whitespace-nowrap">
                  {row.t === "φ" ? <span className="font-['Liberation_Sans'] text-xs leading-none">φ</span> : row.t}
                  {row.s && <sub className="bottom-[-1px] pl-px text-[10px] leading-none">{row.s}</sub>}
                </label>
              </li>
            );
          })}
        </ul>
        <div className="flex h-[17px] items-center justify-between bg-[#f0f0f0] px-1">
          <svg viewBox="0 0 8 8" className="h-2 w-2"><path d="M6 0L2 4l4 4" fill="none" stroke="#444" strokeWidth="1.800" /></svg>
          <span className="mr-7 ml-1 h-[15px] flex-1 bg-[#cdcdcd]" />
          <svg viewBox="0 0 8 8" className="h-2 w-2"><path d="M2 0l4 4-4 4" fill="none" stroke="#444" strokeWidth="1.800" /></svg>
        </div>
      </div>
      <div className="flex h-[24px] items-start border-t border-[#7d838f] pt-px pl-1 text-[11px] text-[#4c515c]">
        <button className="flex h-[21px] w-[71px] items-center gap-[2px] pl-[2px]"><Icon name="navData" />Данные</button>
        <button className="flex h-[21px] w-[76px] items-center gap-[2px] pl-[2px]"><Icon name="navShow" />Изобра...</button>
        <button className="flex h-[21px] w-[53px] items-center gap-[1px]"><Icon name="navView" />Виды</button>
        <button className="flex h-5 w-[69px] items-center gap-[2px] rounded-b border border-t-0 border-[#cfe4ea] bg-[#eef1f6] pl-[2px]">
          <Icon name="navRes" />Результ...
        </button>
      </div>
    </aside>
  );
}

/* ---------- model view ---------- */

const SPANS = [0, 1, 2, 3, 4, 5, 6];

function BeamModel({ dy, origin }: { dy: number; origin?: boolean }) {
  return (
    <g transform={`translate(0 ${dy})`}>
      {/* horizontal load */}
      <path d="M499.500 286L561 257.500 1018 384 957 412.500z" fill="#e2cbe3" />
      <path d="M582.500 240v75" stroke="#2f9090" opacity=".7" />
      <path d="M499.500 286L561 257.500 1018 384 957 412.500z" fill="none" stroke="#800080" />
      {SPANS.map((k) => {
        const x = 499.5 + k * 76.3;
        const y = 286 + k * 21.1;
        return (
          <g key={k} stroke="#800080" fill="#800080">
            <path d={`M${x} ${y}l61 -28.500`} />
            <path d={`M${x + 61} ${y - 28.5}l-6 0 2 5z`} stroke="none" />
          </g>
        );
      })}
      <circle cx="728.500" cy="349.500" r="2" fill="#800080" />

      {/* vertical load */}
      <path d="M582.500 177L1040.500 304V341L582.500 214z" fill="#c9c9fb" />
      <path d="M582.500 177L1040.500 304M582.500 214L1040.500 341" stroke="#0000f0" fill="none" />
      {SPANS.map((k) => {
        const x = 582.5 + k * 76.33;
        const y = 177 + k * 21.17;
        return (
          <g key={k}>
            <path d={`M${x} ${y}v37`} stroke="#0000f0" />
            <path d={`M${x - 3} ${y + 32}h6l-3 6z`} fill="#0000f0" />
          </g>
        );
      })}
      <circle cx="811.500" cy="240.500" r="2" fill="#0000f0" />

      {/* I-beam */}
      <path d="M577 255L582 252 1037 379 1037 386 1033 387 577 261z" fill="#0d0d80" />
      <path d="M582.500 240L1034 366V382L582.500 256z" fill="url(#web)" />
      <path d="M1034 367l6-3v15l-6 6z" fill="#1414d8" />
      <path d="M576 240L589 233 1047 360 1034 367z" fill="#101078" />
      <path d="M1034 366L1046 361M1041 365v16" stroke="#e01010" strokeWidth="1.500" fill="none" />
      <path d="M575.500 240.500L1033.500 366.500V386" stroke="#fff" strokeDasharray="1 1.500" fill="none" />
      <path d="M575.500 240.500L589 232.500 1048 359.500" stroke="#8a8a98" strokeDasharray="1 1.500" fill="none" />
      <path d="M590 265.500L1033 388.500" stroke="#999" strokeDasharray="1 1.500" />

      {/* left support */}
      <path d="M549 278.500L570 257 587 289z" fill="#6fe36f" />
      <path d="M571 258L616 274 587 289z" fill="#33cf33" />
      <path d="M562 255l18-8c5-1 8 3 8 7 0 3-2 5-4 6l-18 4c-4-1-6-5-4-9z" fill="#22ee22" opacity=".85" />
      <path d="M582 247c7 1 7 10 1 13z" fill="#108a60" />
      <path d="M561 257.500l55 15.500" stroke="#800080" opacity=".4" />

      {/* right support */}
      <path d="M1021 380l31-12c8-2 12 8 6 13l-26 11c-10 2-16-6-11-12z" fill="#22f022" opacity=".85" />
      <path d="M1034 378l8-2v8l-8 2z" fill="#10907a" />
      <path d="M1007 405.500L1027 385 1044 407z" fill="#7df37d" />
      <path d="M1058 381L1074 401.500 1044 415.500 1023 391z" fill="#2ee02e" />
      <path d="M1024 408L1044 395 1074 402 1044 416z" fill="#10d010" opacity=".8" />
      {origin ? (
        <path d="M1007 414.500l38 10.500M1050 416l24-6" stroke="#1fe01f" strokeWidth="2.500" />
      ) : (
        <g>
          <path d="M1007 415L1037 403 1074 411 1044 426z" fill="#3f9e4c" />
          <path d="M1024 410L1044 403 1074 411 1044 416z" fill="#12c412" />
          <path d="M1007 415v2l37 9.500 30-13v-3l-30 13z" fill="#6fe07a" />
          <path d="M1046 366l21 -1M1056 362l10 4M1050 371l8-6" stroke="#22e022" strokeWidth="1.300" />
        </g>
      )}

      <text x="801" y="233" fill="#0000d8" fontSize="9">2.700</text>
      <text x="701" y="353" fill="#800080" fontSize="9">6.750</text>
    </g>
  );
}

function Axes({ x, y, labels }: { x: number; y: number; labels: number[][] }) {
  return (
    <g transform={`translate(${x} ${y})`} fontSize="10">
      <path d="M0 0l26 7" stroke="#f00000" strokeWidth="2" />
      <path d="M24 4l9 4.500-10 1z" fill="#a00" />
      <path d="M0 0l-18 8.500" stroke="#10f010" strokeWidth="2" />
      <path d="M-17 6l-8 6 9-1z" fill="#0a9020" />
      <path d="M0 0v31" stroke="#00ffff" strokeWidth="2" />
      <path d="M-3 29h6l-3 9z" fill="#009aa0" />
      <text x={labels[0][0]} y={labels[0][1]} fill="#e00000">X</text>
      <text x={labels[1][0]} y={labels[1][1]} fill="#10e010">Y</text>
      <text x={labels[2][0]} y={labels[2][1]} fill="#00f0ff">Z</text>
    </g>
  );
}

function ModelView() {
  const dots: number[][] = [];
  for (let k = 0; k < 11; k++) {
    for (let y = 602 + 25.3 * k - 108 * 8; y < 800; y += 108) {
      if (y > 110) dots.push([Math.round(307 + 91.6 * k), Math.round(y)]);
    }
  }
  return (
    <main className="flex min-w-0 flex-1 flex-col border-t-2 border-l-2 border-[#6d7078] bg-[#fcfcfc]">
      <svg className="min-h-0 w-full flex-1 overflow-hidden font-['Liberation_Sans']" role="img" aria-label="Модель">
        <defs>
          <linearGradient id="web" x1="0" y1="0" x2="0" y2="1">
            <stop offset="0" stopColor="#2222f8" />
            <stop offset="1" stopColor="#1a1ae6" />
          </linearGradient>
        </defs>
        <g transform="translate(-292 -108)">
          {dots.map(([x, y]) => (
            <rect key={`${x}-${y}`} x={x} y={y} width="1" height="1" fill="#000" />
          ))}
          <path d="M582.500 100v710M290 490.500L582 570.500M1040 697l280 78" stroke="#2f9090" fill="none" />
          <BeamModel dy={0} />
          <BeamModel dy={324} origin />
          <Axes x={582} y={571} labels={[[37, 15], [-32, 18], [-3, 51]]} />
          <Axes x={347} y={679} labels={[[37, 15], [-34, 18], [-3, 51]]} />
          <text x="296" y="124" fontSize="10">CH1 : 1.35*3 Г1</text>
          <text x="296" y="138" fontSize="10">Нагрузки [kH/м]</text>
        </g>
      </svg>
    </main>
  );
}

/* ---------- right panel ---------- */

function Stepper() {
  return (
    <span className="flex w-4 flex-col gap-px">
      <button aria-label="Больше" className="flex flex-1 items-center justify-center border border-[#d5d5d5] bg-[#f0f0f0]">
        <span className="border-x-[3px] border-b-[3px] border-x-transparent border-b-[#666]" />
      </button>
      <button aria-label="Меньше" className="flex flex-1 items-center justify-center border border-[#d5d5d5] bg-[#f0f0f0]">
        <span className="border-x-[3px] border-t-[3px] border-x-transparent border-t-[#666]" />
      </button>
    </span>
  );
}

const FACTORS = ["Деформация:", "Эпюры - стержни:", "Эпюры - поверхности:", "Эпюры - разрезы:", "Опорные реакции:", "Траектории:"];

function SidePanel() {
  return (
    <aside className="ml-[5px] flex w-[154px] shrink-0 flex-col">
      <div className="flex flex-1 flex-col bg-[#f0f0f0]">
        <PanelTitle text="Панель" />
        <div className="flex flex-col gap-[9px] pt-[2px] pr-[2px] pl-1 text-[11px] text-black">
          <p className="-mb-[5px] h-[19px] leading-[19px] whitespace-nowrap">Изобразить коэфф-ты</p>
          {FACTORS.map((f, i) => (
            <div key={f} className="flex h-[46px] flex-col justify-between border-r border-b border-[#a9aaf0] bg-[#f7f7f7] pb-1 pl-[3px]">
              <label htmlFor={`f${i}`} className="leading-[20px] whitespace-nowrap">{f}</label>
              <span className="flex h-5 w-[68px] border border-[#bdbdbd] bg-white p-px">
                <input id={`f${i}`} disabled className="w-0 flex-1 bg-[#f0f0f0]" />
                <Stepper />
              </span>
            </div>
          ))}
          <div className="flex h-[46px] flex-col justify-between border-r border-b border-[#a9aaf0] bg-[#f7f7f7] pb-1 pl-[3px]">
            <label className="flex h-5 items-center gap-[2px] text-[#7a7a7a]">
              <input type="checkbox" disabled className="h-[13px] w-[13px] appearance-none border border-[#c8c8c8] bg-white" />
              Приращения:
            </label>
            <span className="flex h-[21px]">
              <span className="grid w-[90px] border border-[#c8c8c8] bg-white p-px">
                <select aria-label="Приращение" disabled className="col-start-1 row-start-1 mr-4 appearance-none bg-[#f0f0f0]" />
                <svg viewBox="0 0 8 8" className="pointer-events-none col-start-1 row-start-1 mr-1 h-2 w-2 self-center justify-self-end">
                  <path d="M0 2l4 4 4-4" fill="none" stroke="#bbb" />
                </svg>
              </span>
              <Stepper />
            </span>
          </div>
        </div>
        <div className="mt-5 flex gap-[5px] pr-[6px] pl-[6px]">
          {["note", "copyval", "lock"].map((b) => (
            <button
              key={b}
              aria-label={b}
              className={
                "flex h-[21px] w-[25px] items-center justify-center border border-[#adadad] bg-[#e6e6e6] " +
                (b === "lock" ? "ml-auto" : "")
              }
            >
              <Icon name={b} />
            </button>
          ))}
        </div>
      </div>
      <div className="flex h-[22px] items-start gap-1 border-t border-[#8a909c] pl-[3px]">
        <button aria-label="Масштаб" className="flex h-5 w-[25px] items-center justify-center rounded-b border border-t-0 border-[#cfe4ea] bg-[#eef1f6]">
          <Icon name="scales" />
        </button>
        <button aria-label="Вид" className="flex h-5 w-[25px] items-center justify-center"><Icon name="scope" /></button>
      </div>
    </aside>
  );
}

/* ---------- table ---------- */

const LETTERS = "ABCDEFGHIJ".split("");

// x = ticked, o = empty box
const ROWS = [
  ["1,3", "Общие X,Y,Z", "o", "x", "x", "x", "x", "o", "x"],
  ["4", "Общие X,Y,Z", "o", "o", "10.000", "x", "x", "o", "x"],
  ["2", "Общие X,Y,Z", "o", "o", "x", "x", "x", "o", "x"],
];

const TABS = [
  "Узлы", "Линии", "Материалы", "Поверхности", "Тела", "Отверст.", "Узловые опоры", "Линейные опоры",
  "Опоры поверхностей", "Линейные шарниры", "Сечения", "Шарниры стержней", "Эксцентриситеты стержня",
];

function Cell({ v, label }: { v: string; label: string }) {
  if (v !== "x" && v !== "o") return <>{v}</>;
  return (
    <span className="mx-auto grid w-[11px] place-items-center">
      <input
        type="checkbox"
        aria-label={label}
        defaultChecked={v === "x"}
        className="col-start-1 row-start-1 h-[11px] w-[11px] appearance-none border border-r-2 border-b-2 border-black bg-white"
      />
      {v === "x" && (
        <svg viewBox="0 0 9 9" className="pointer-events-none col-start-1 row-start-1 h-2 w-2">
          <path d="M1 4l2.500 3L7.500 1" fill="none" stroke="#000" strokeWidth="1.600" />
        </svg>
      )}
    </span>
  );
}

function DofHead({ a, b }: { a: string; b: string }) {
  return (
    <th className="border-r border-[#a0a0a0] bg-[#f0f0f0] font-normal">
      {a}
      <span className="pl-px text-[10px]">{b}</span>
    </th>
  );
}

function TablePanel() {
  return (
    <section className="mt-[5px] flex shrink-0 flex-col bg-[#f0f0f0]">
      <PanelTitle text="1.7 Узловые опоры" />
      <div className="flex h-[27px] items-center bg-linear-to-b from-[#e9edf6] to-[#d2d8e4] pl-[9px]">
        <Tools items="*tEdit tPlus tDown tDiag tWave | tLeft tRight | *curveA *curveB cycle | gPlus gX gDots | gDel | rowDel rowIn rowOut | tYellow tBlue | sheet | handdoc glasses excel calc | abeq fx fxr" />
      </div>
      <div className="flex border-t-2 border-l-2 border-[#777a82]">
        <table className="w-0 flex-1 table-fixed border-separate border-spacing-0 font-['Liberation_Sans'] text-[11px] leading-[14px] text-black">
          <colgroup>
            <col className="w-[47px]" />
            <col className="w-[162px]" />
            <col className="w-[114px]" />
            <col className="w-[60px]" />
            <col className="w-[72px]" />
            <col className="w-[72px]" />
            <col className="w-[72px]" />
            <col className="w-[72px]" />
            <col className="w-[72px]" />
            <col className="w-[72px]" />
            <col />
          </colgroup>
          <thead className="bg-[#f0f0f0]">
            <tr className="h-[15px]">
              <th rowSpan={3} className="border-r border-b border-[#a0a0a0] bg-[#f0f0f0] font-normal">
                Опора
                <br />№
              </th>
              {LETTERS.map((l) => (
                <th
                  key={l}
                  className={
                    "border-t border-r border-b border-[#8d8d8d] leading-[13px] font-normal " +
                    (l === "A" ? "bg-[#3399ff] text-white" : "bg-[#e1e1e1]")
                  }
                >
                  {l}
                </th>
              ))}
            </tr>
            <tr className="h-4">
              <th className="border-r border-[#a0a0a0] bg-[#f0f0f0]" />
              <th className="border-r border-[#a0a0a0] bg-[#f0f0f0]" />
              <th className="border-r border-[#a0a0a0] bg-[#f0f0f0] font-normal">Колонна</th>
              <th colSpan={3} className="border-r border-[#a0a0a0] bg-[#f0f0f0] font-normal">Опора или пружина [kН/м]</th>
              <th colSpan={3} className="overflow-hidden border-r border-[#a0a0a0] bg-[#f0f0f0] text-left font-normal whitespace-nowrap">
                Заделка с поворотом или пружина [kНм/р
              </th>
              <th className="border-r border-[#a0a0a0] bg-[#f0f0f0]" />
            </tr>
            <tr className="h-[18px] *:border-b *:pb-px">
              <th className="border-r border-[#a0a0a0] bg-[#f0f0f0] font-normal">На узлах №</th>
              <th className="border-r border-[#a0a0a0] bg-[#f0f0f0] font-normal">Система координат</th>
              <th className="border-r border-[#a0a0a0] bg-[#f0f0f0] font-normal">по Z</th>
              <DofHead a="u" b="X" />
              <DofHead a="u" b="Y" />
              <DofHead a="u" b="Z" />
              <DofHead a="φ" b="X" />
              <DofHead a="φ" b="Y" />
              <DofHead a="φ" b="Z" />
              <th className="border-r border-[#a0a0a0] bg-[#f0f0f0] font-normal">Комментарий</th>
            </tr>
          </thead>
          <tbody>
            {Array.from({ length: 10 }, (_, r) => (
              <tr key={r} className="h-4">
                <th
                  className={
                    "border-r-2 border-b-2 border-[#a0a0a0] leading-[13px] font-normal " +
                    (r === 0 ? "bg-[#3399ff] text-white" : "bg-[#e1e1e1]")
                  }
                >
                  {r + 1}
                </th>
                {LETTERS.map((l, c) => (
                  <td
                    key={l}
                    className={
                      "border-r border-b border-[#a0a0a0] " +
                      (c < 2 ? "pl-1 " : "text-center ") +
                      (c === 9 && r > 2 ? "bg-[#e6e6e6] " : "bg-white ") +
                      (r === 0 && c === 0 ? "outline-1 -outline-offset-1 outline-dotted outline-black" : "")
                    }
                  >
                    {ROWS[r] && ROWS[r][c] && <Cell v={ROWS[r][c]} label={`${l}${r + 1}`} />}
                  </td>
                ))}
              </tr>
            ))}
          </tbody>
        </table>
        <div className="flex w-[20px] flex-col items-center justify-between bg-[#f0f0f0] py-1">
          <svg viewBox="0 0 8 8" className="h-2 w-2"><path d="M0 6l4-4 4 4" fill="none" stroke="#444" strokeWidth="1.500" /></svg>
          <svg viewBox="0 0 8 8" className="h-2 w-2"><path d="M0 2l4 4 4-4" fill="none" stroke="#444" strokeWidth="1.500" /></svg>
        </div>
      </div>
      <div className="mt-3 flex h-[35px] items-start font-['Liberation_Sans'] text-[11px] text-black">
        <div className="flex min-w-0 flex-1 border-t border-[#8d8d8d]">
          {TABS.map((t) => (
            <button
              key={t}
              className={
                "ml-px h-4 rounded-b-sm border-r border-b border-[#7a7a7a] px-1 leading-[14px] whitespace-nowrap " +
                (t === "Узловые опоры" ? "bg-[#f6f6f6]" : "bg-[#e4e4e4]")
              }
            >
              {t}
            </button>
          ))}
        </div>
        <svg viewBox="0 0 64 16" className="h-4 w-16" aria-hidden="true">
          <path d="M.5.5h15v15H.5zM16.500.500h15v15h-15zM32.500.500h15v15h-15zM48.500.500h15v15h-15z" fill="#f0f0f0" stroke="#d0d0d0" />
          <path d="M6 5v6M12 5l-4 3 4 3zM26 5l-4 3 4 3z" fill="#aaa" stroke="#aaa" />
          <path d="M38 4l5 4-5 4zM53 4l5 4-5 4zM59 4h2v8h-2z" fill="#000" />
        </svg>
      </div>
    </section>
  );
}

function StatusBar() {
  return (
    <footer className="grid h-[25px] grid-cols-[692fr_773fr] border-t border-[#8d929c] bg-linear-to-b from-[#d9dde5] via-[#a9afba] to-[#b9bec8] font-['Liberation_Sans'] text-[11px] text-[#30343c]">
      <span className="border-b-2 border-[#787d87]" />
      <div className="flex items-start gap-[2px] border-b-2 border-[#787d87] pt-[2px]">
        {["ФИКС", "СЕТКА", "ДЕКАРТ", "ФИКОБ", "НАЛИН", "DXF"].map((s) => (
          <span key={s} className="h-[18px] border-t border-r border-b border-l border-t-[#222] border-r-white border-b-white border-l-[#222] px-[2px] leading-4">
            {s}
          </span>
        ))}
        <span className="flex flex-1 justify-end gap-20 pr-[3px]">
          {[0, 1, 2, 3, 4].map((k) => (
            <span key={k} className="h-[18px] w-px bg-[#989eaa]" />
          ))}
        </span>
      </div>
    </footer>
  );
}

export default function App() {
  return (
    <div className="flex min-h-screen flex-col border-x border-[#6f737c] bg-[#d0d4dd] font-['Noto_Sans',sans-serif] leading-4">
      <Header />
      <div className="flex flex-1 gap-1 pr-px">
        <Navigator />
        <div className="flex min-w-0 flex-1 flex-col">
          <div className="flex flex-1">
            <ModelView />
            <SidePanel />
          </div>
          <TablePanel />
        </div>
      </div>
      <StatusBar />
    </div>
  );
}
